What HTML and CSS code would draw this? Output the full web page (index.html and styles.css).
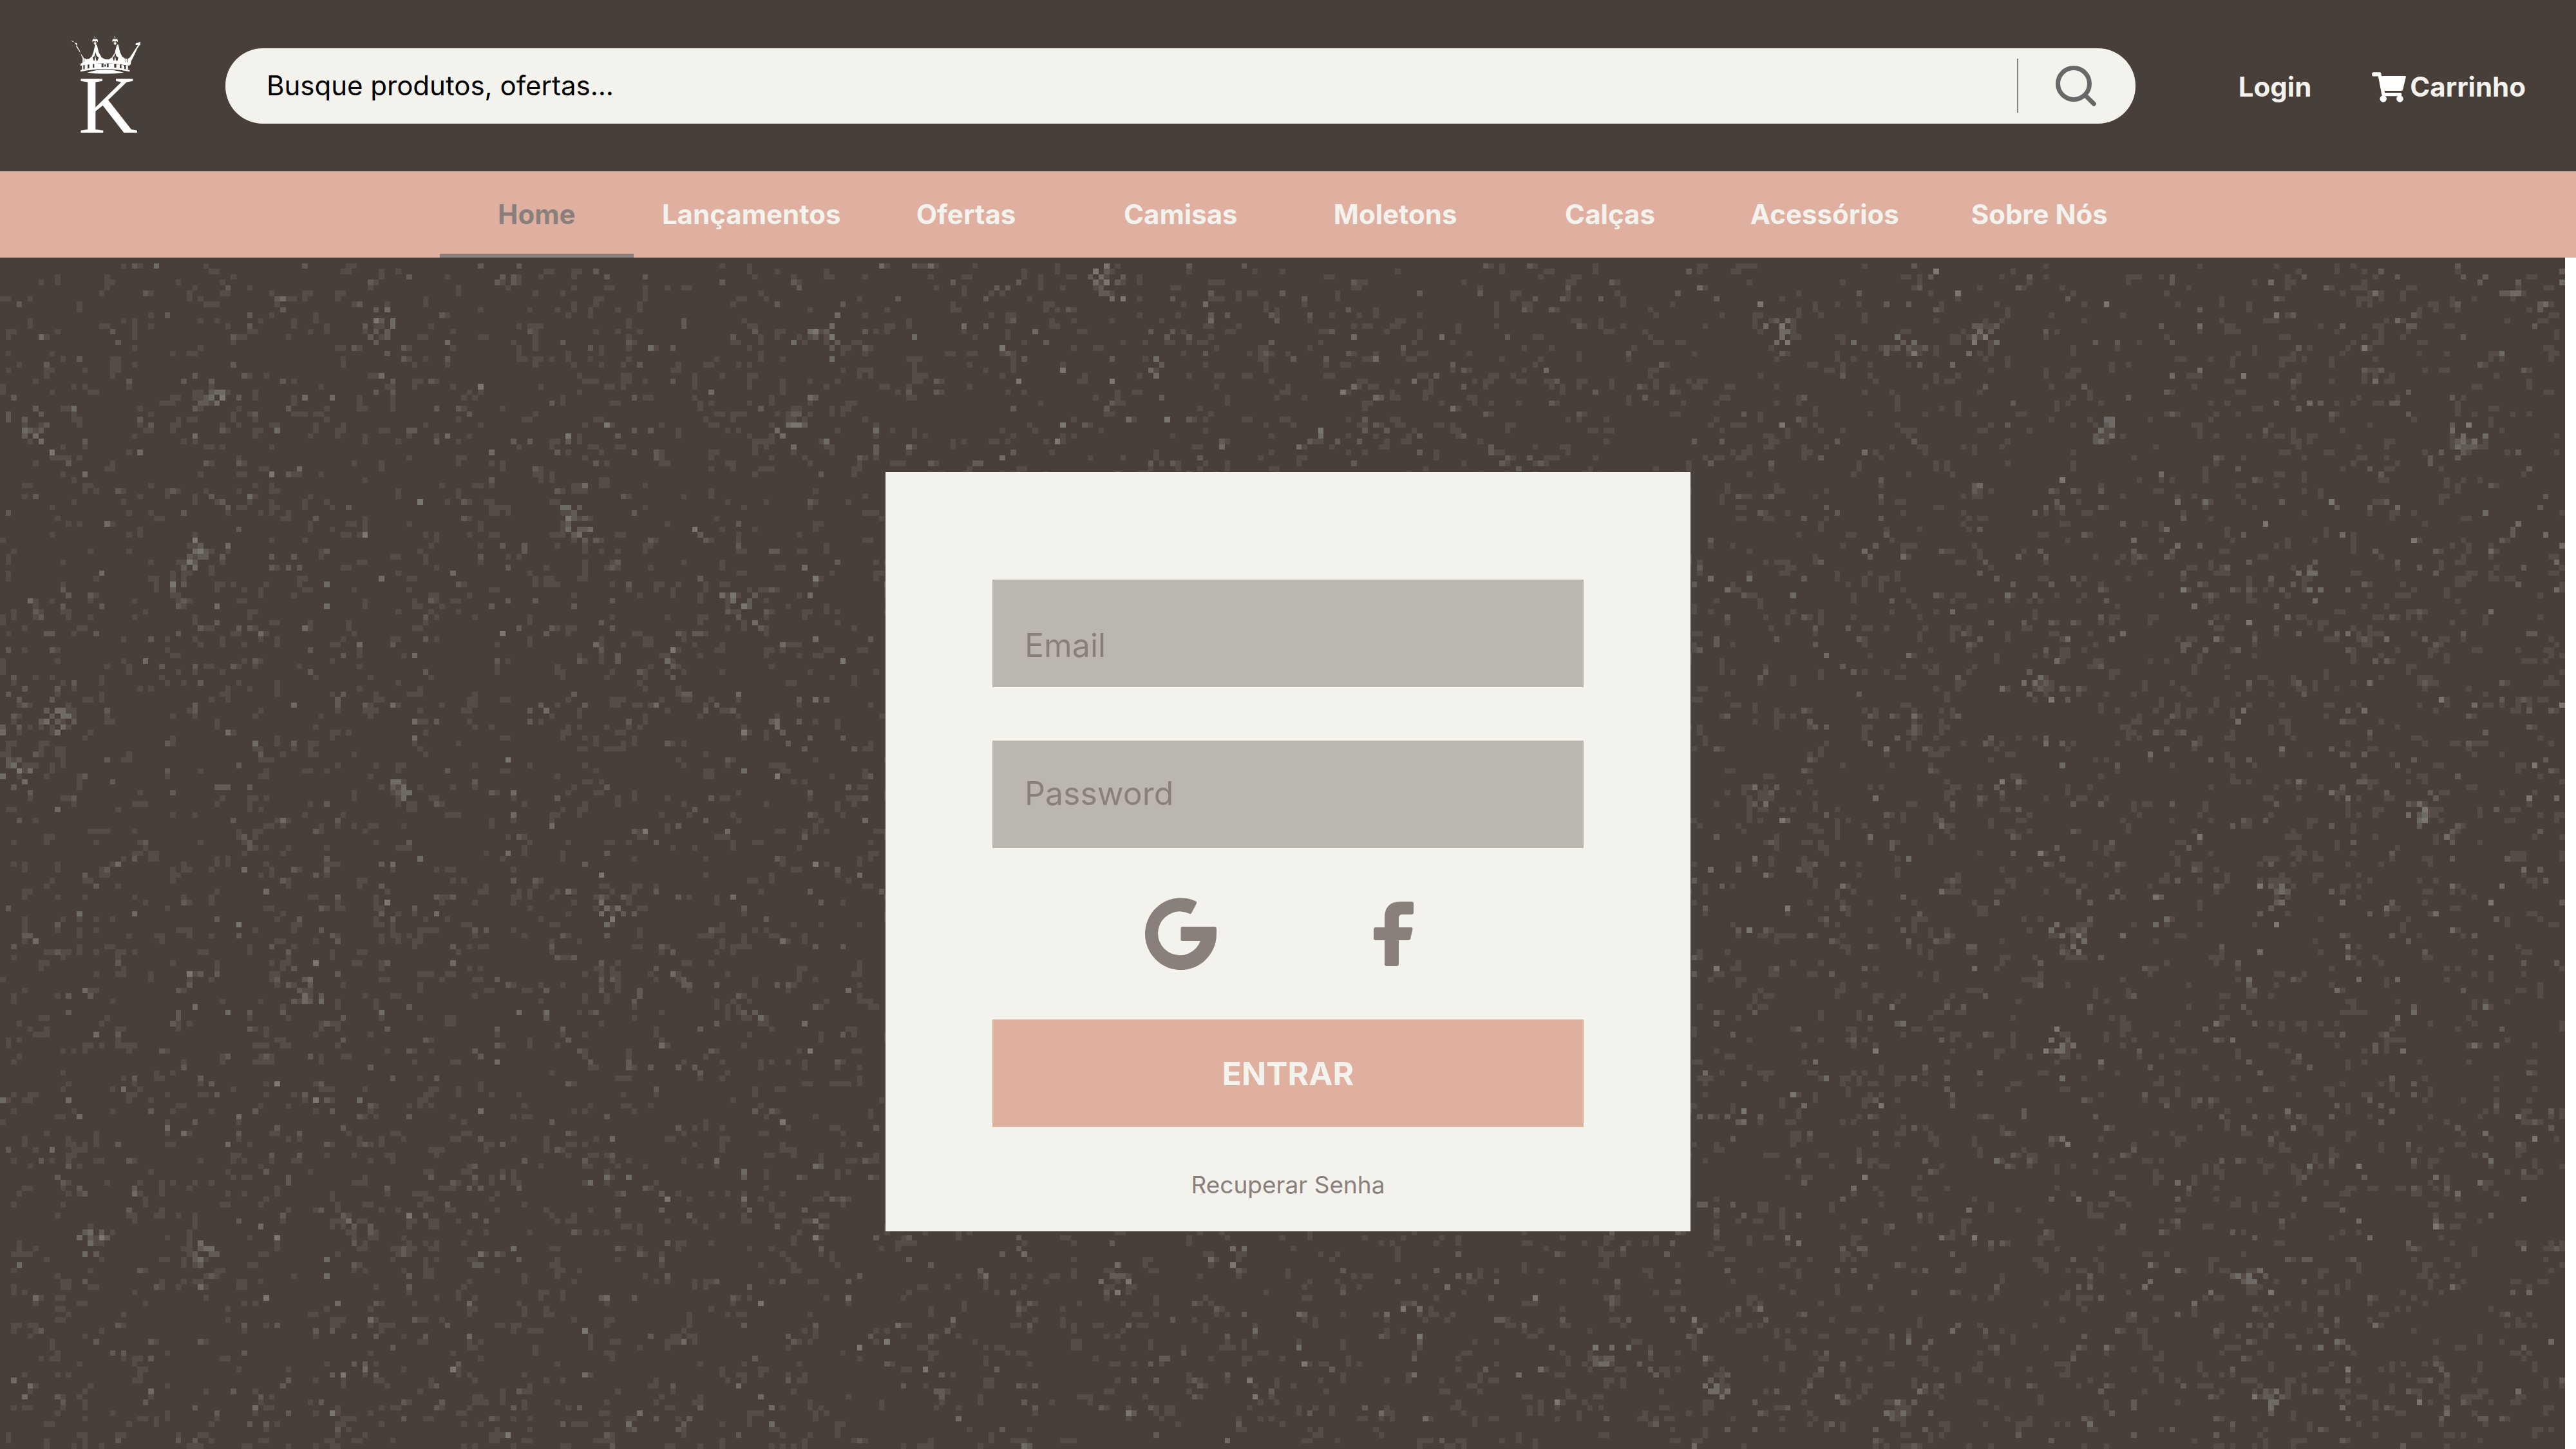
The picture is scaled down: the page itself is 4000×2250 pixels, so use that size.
FILE: index.html
```html
<!DOCTYPE html>
<html lang="pt-BR">
<head>
  <meta charset="utf-8">
  <title>Login</title>
  <meta name="viewport" content="width=device-width, initial-scale=1">
  <link rel="stylesheet" href="styles.css">
</head>
<body>
  <header class="topbar">
    <a class="logo" href="#" aria-label="K">
      <svg class="logo-art" viewBox="90 60 330 480" fill="#fff">
        <path d="M93 99l14 3 5 7 12 2 2 10-7 2 9 15 10 15 18 26 12 7 14-2 12-12 8-22 7-32 8 0 9 35 13 24 17 10 17 0 14-9 13-22 11-38 6 0 8 34 9 20 13 10 15 2 9-6 14-22 18-27 6-8-12-2 3-8 13-3 15-9 8 1-8 13-12 8-10 14-12 26-18 36-1 14Q254 228 141 208l9-5-3-28-10-30-16-27-12-12z"/>
        <path d="M206 76l4 9-1 9 7-3 6 6-1 10-4-6-6 2v5h4v5h-3v6h-6v-6h-3v-5h4v-5l-6-2-4 6-1-10 6-6 6 3-1-9zM299 76l4 9-1 9 7-3 6 6-1 10-4-6-6 2v5h4v5h-3v6h-6v-6h-3v-5h4v-5l-6-2-4 6-1-10 6-6 6 3-1-9z"/>
        <path fill="#483f3a" d="M141 216Q254 193 370 216V236Q254 210 141 236z"/>
        <path d="M141 207Q254 183 370 207V216Q254 193 141 216zM148 216l6-2v19l-6 2zM161 214l13-3v18l-13 3zM182 210l16-2v19l-16 2zM205 207h34v20l-34 2zM272 207h26v21l-26-1zM308 209l16 2v19l-16-2zM332 212l13 3v18l-13-3zM353 214l9 2v18l-9-2zM141 236Q254 210 370 236V244Q254 219 141 244zM172 248Q254 222 343 248 254 259 172 248z"/>
        <path fill="#483f3a" d="M211 153l5 17 10 8-5 14h-19l-4-14 9-8zM302 153l5 17 10 8-3 14h-19l-5-14 9-8zM148 176h3v24h-3zM157 178h2v20h-2zM360 176h3v24h-3zM352 182h2v18h-2z"/>
        <path d="M210 168l4 24h-7zM302 168l4 24h-7z"/>
        <ellipse cx="256" cy="215" rx="6" ry="9" fill="none" stroke="#fff" stroke-width="5"/>
        <text class="logo-letter" x="131" y="528">K</text>
      </svg>
    </a>
    <form class="search" role="search">
      <input class="search-input" type="search" aria-label="Buscar" placeholder="Busque produtos, ofertas...">
      <button class="search-button" type="button" aria-label="Buscar">
        <svg class="search-icon" viewBox="0 0 63 63" fill="none" stroke="#686868" stroke-width="7" stroke-linecap="round">
          <circle cx="28" cy="28" r="24.5"/>
          <path d="M46.500 46.500L59.300 59.300"/>
        </svg>
      </button>
    </form>
    <a class="account-link" href="#">Login</a>
    <a class="account-link cart" href="#">
      <svg class="cart-icon" viewBox="69 66 159 142" fill="#fff">
        <path d="M77 66.500h28q6 0 7 6l2 12h110q5 0 4 5l-14 59q-1 5-6 5H128l1 9h74q5 0 5 5v6q0 5-5 5h-78q-8 0-10-7L98 86H77q-8 0-8-8v-4q0-7.500 8-7.500z"/>
        <circle cx="122" cy="191" r="16"/>
        <circle cx="200" cy="191" r="16"/>
      </svg>
      Carrinho
    </a>
  </header>

  <nav class="menu">
    <a class="menu-link active" href="#">Home</a>
    <a class="menu-link" href="#">Lançamentos</a>
    <a class="menu-link" href="#">Ofertas</a>
    <a class="menu-link" href="#">Camisas</a>
    <a class="menu-link" href="#">Moletons</a>
    <a class="menu-link" href="#">Calças</a>
    <a class="menu-link" href="#">Acessórios</a>
    <a class="menu-link" href="#">Sobre Nós</a>
  </nav>

  <main class="stage">
    <canvas class="texture" width="467" height="217" aria-hidden="true"></canvas>
    <form class="card">
      <input class="field field-email" type="email" aria-label="Email" placeholder="Email">
      <input class="field" type="password" aria-label="Password" placeholder="Password">
      <div class="social">
        <button class="social-button" type="button" aria-label="Google">
          <svg class="google-icon" viewBox="0 0 111 112" fill="#8a807b">
            <path d="M78.500 5.200A55.500 56 0 1 0 111 56V48Q111 45 108 45H58Q55.500 45 55.500 48V64Q55.500 67 58 67H86A34 34 0 1 1 69 24.800Q71 26 72.300 23.500L79.900 9Q81 6.500 78.500 5.200Z"/>
          </svg>
        </button>
        <button class="social-button" type="button" aria-label="Facebook">
          <svg class="facebook-icon" viewBox="0 0 62 100" fill="#8a807b">
            <path d="M42 0H59Q62 0 62 3V17Q62 20 59 20H44Q39 20 39 26V40H58Q61 40 60.500 43L57 58Q56.500 60 54 60H39V97Q39 100 36 100H20Q17 100 17 97V60H3Q0 60 0 57V43Q0 40 3 40H17V25Q17 0 42 0Z"/>
          </svg>
        </button>
      </div>
      <button class="submit" type="button">ENTRAR</button>
      <a class="recover" href="#">Recuperar Senha</a>
    </form>
  </main>
  <script src="texture.js"></script>
</body>
</html>
```
FILE: styles.css
```css
* {
  box-sizing: border-box;
}

body {
  display: flex;
  flex-direction: column;
  min-height: 100vh;
  margin: 0;
  background: #fff;
  color: #f4f2ed;
  font-family: Inter, "Liberation Sans", sans-serif;
  font-size: 42px;
  line-height: 52px;
}

a {
  color: inherit;
  text-decoration: none;
}

button {
  padding: 0;
  border: 0;
  background: none;
  font: inherit;
}

input {
  border: 0;
  border-radius: 0;
  outline: 0;
  font: inherit;
}

svg {
  display: block;
}

.topbar {
  display: flex;
  align-items: center;
  height: 266px;
  padding: 0 78px 0 108px;
  background: #483f3a;
}

.logo {
  margin-right: 132px;
  padding-bottom: 6px;
}

.logo-art {
  width: 110px;
  height: 160px;
}

.logo-letter {
  font-family: "Liberation Serif", serif;
  font-size: 384px;
}

.search {
  display: flex;
  flex: 1;
  align-items: center;
  height: 117px;
  margin-right: 160px;
  border-radius: 58px;
  background: #f4f2ed;
}

.search-input {
  flex: 1;
  height: 100%;
  padding: 0 0 2px 64px;
  background: none;
  color: #000;
}

.search-input::placeholder {
  color: #000;
  opacity: 1;
}

.search-button {
  display: flex;
  align-items: center;
  width: 184px;
  height: 84px;
  padding-left: 58px;
  border-left: 2px solid #838383;
}

.search-icon {
  width: 63px;
  height: 63px;
}

.account-link {
  display: flex;
  align-items: center;
  gap: 6px;
  padding-top: 4px;
  font-weight: 700;
}

.cart {
  margin-left: 94px;
}

.cart-icon {
  width: 53px;
  height: 47px;
}

.menu {
  display: grid;
  grid-template-columns: repeat(8, 1fr);
  height: 134px;
  padding: 0 calc(100% / 6);
  background: #dfb0a0;
}

.menu-link {
  display: flex;
  align-items: center;
  justify-content: center;
  margin: 0 16px;
  border: solid transparent;
  border-width: 6px 0;
  font-weight: 700;
}

.menu-link.active {
  border-bottom-color: #8a807b;
  color: #8a807b;
}

.stage {
  position: relative;
  display: flex;
  flex: 1;
  align-items: flex-start;
  justify-content: center;
  margin-right: 17px;
  padding: 333px 0 333px 17px;
  background: #483f3a;
}

.texture {
  position: absolute;
  top: 0;
  left: 0;
  width: 100%;
  height: 100%;
  image-rendering: pixelated;
}

.card {
  position: relative;
  display: flex;
  flex-direction: column;
  width: 1250px;
  padding: 167px 166px 46px;
  background: #f4f2ed;
}

.field {
  width: 100%;
  height: 167px;
  padding: 0 50px 4px;
  background: #bcb6b0;
  color: #8a807b;
  font-size: 50px;
}

.field::placeholder {
  color: #8a807b;
  opacity: 1;
}

.field-email {
  margin-bottom: 83px;
  padding-top: 40px;
}

.social {
  display: flex;
  align-items: center;
  justify-content: center;
  gap: 244px;
  height: 266px;
  padding-right: 28px;
}

.google-icon {
  width: 111px;
  height: 112px;
}

.facebook-icon {
  width: 62px;
  height: 100px;
}

.submit {
  height: 167px;
  background: #dfb0a0;
  color: #f4f2ed;
  font-size: 50px;
  font-weight: 700;
}

.recover {
  align-self: center;
  margin-top: 64px;
  color: #8a807b;
  font-size: 37px;
}
```
FILE: texture.js
```js
// Speckled asphalt texture: sparse single cells plus a few brighter clusters.
const canvas = document.querySelector('.texture');
const ctx = canvas.getContext('2d');
const shades = ['#554c46', '#605b55', '#6e6a65', '#7a7672'];

// Seeded generator, so the texture is the same on every load.
let seed = 20417;
function random() {
  seed = (seed + 0x6d2b79f5) | 0;
  let t = Math.imul(seed ^ (seed >>> 15), 1 | seed);
  t = (t + Math.imul(t ^ (t >>> 7), 61 | t)) ^ t;
  return ((t ^ (t >>> 14)) >>> 0) / 4294967296;
}

function cell(x, y, shade) {
  ctx.fillStyle = shades[shade];
  ctx.fillRect(x, y, 1, 1);
}

function pickShade() {
  const r = random();
  if (r < 0.7) return 0;
  if (r < 0.93) return 1;
  return r < 0.985 ? 2 : 3;
}

for (let y = 1; y < canvas.height; y++) {
  for (let x = 0; x < canvas.width; x++) {
    if (random() < 0.08) {
      cell(x, y, pickShade());
      if (random() < 0.2) cell(x + 1, y, 0);
      if (random() < 0.2) cell(x, y + 1, 0);
    }
  }
}

// Cluster centres in cells.
const clusters = [
  [69, 12], [38, 25], [10, 84], [3, 93], [324, 13], [347, 16], [360, 14],
  [143, 29], [371, 77], [376, 123], [345, 210], [413, 207], [17, 178],
  [179, 111], [201, 4], [104, 48], [420, 59], [73, 96], [56, 134],
  [291, 201], [409, 186], [35, 54], [6, 30], [149, 13],
  [414, 115], [62, 175], [36, 181], [110, 118], [203, 186], [312, 205],
  [383, 31], [449, 33], [134, 63], [441, 100], [320, 98], [375, 143],
];
for (const [cx, cy] of clusters) {
  for (let i = 0; i < 18; i++) {
    const dx = Math.round((random() + random() - 1) * 3.5);
    const dy = Math.round((random() + random() - 1) * 3.5);
    cell(cx + dx, cy + dy, Math.floor(random() * 3.2));
  }
}
```
